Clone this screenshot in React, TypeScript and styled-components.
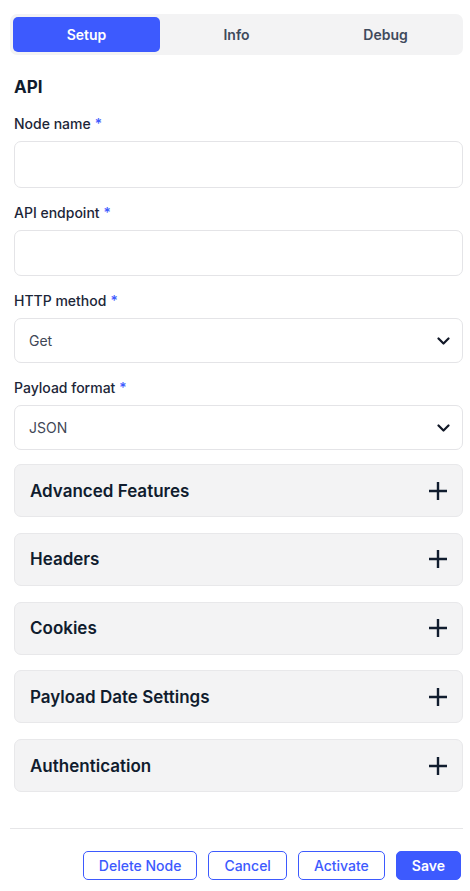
import React from 'react';
import styled, { createGlobalStyle } from 'styled-components';

const GlobalStyle = createGlobalStyle`
	body {
		margin: 0;
		background: #fff;
		font-family: Inter, 'Noto Sans', sans-serif;
		color: #0f1b2d;
	}
`;

const Page = styled.div`
	width: 453px;
	padding: 14px 0 0 10px;
	box-sizing: content-box;
`;

const Tabs = styled.div`
	display: grid;
	grid-template-columns: repeat(3, 1fr);
	padding: 3px;
	height: 41px;
	box-sizing: border-box;
	background: #f3f3f4;
	border-radius: 7px;
`;

const Tab = styled.button<{ active?: boolean }>`
	border: none;
	border-radius: 5px;
	margin-right: ${({ active }) => (active ? '2px' : '0')};
	font-family: inherit;
	font-size: 14px;
	font-weight: 600;
	background: ${({ active }) => (active ? '#3d5afe' : 'transparent')};
	color: ${({ active }) => (active ? '#fff' : '#3f4a5c')};
	cursor: pointer;
`;

const Form = styled.div`
	padding-left: 4px;
	display: flex;
	flex-direction: column;
`;

const Heading = styled.h2`
	margin: 20px 0 0;
	font-size: 17px;
	line-height: 24px;
	font-weight: 700;
	color: #101c2e;
`;

const Label = styled.label`
	display: block;
	margin-top: 15px;
	margin-bottom: 7px;
	font-size: 14px;
	line-height: 20px;
	font-weight: 500;
	color: #1c2638;
	span {
		color: #3d5afe;
		margin-left: 4px;
	}
`;

const Input = styled.input`
	height: 46.5px;
	border: 1px solid #e4e4e7;
	border-radius: 7px;
	box-sizing: border-box;
	padding: 0 14px;
	font-family: inherit;
	font-size: 14px;
	outline: none;
`;

const Select = styled.div`
	height: 45px;
	border: 1px solid #e4e4e7;
	border-radius: 7px;
	box-sizing: border-box;
	padding: 0 12px 0 14px;
	display: flex;
	align-items: center;
	justify-content: space-between;
	font-size: 14px;
	color: #3f4756;
`;

const Accordions = styled.div`
	margin-top: 14px;
	display: flex;
	flex-direction: column;
	gap: 15.75px;
`;

const Accordion = styled.div`
	height: 53px;
	box-sizing: border-box;
	background: #f3f3f4;
	border: 1px solid #e8e8ea;
	border-radius: 7px;
	padding: 0 15px 0 15px;
	display: flex;
	align-items: center;
	justify-content: space-between;
	font-size: 17px;
	font-weight: 600;
	color: #101c2e;
`;

const Divider = styled.hr`
	margin: 36px 0 0;
	border: none;
	border-top: 1px solid #e6e6e8;
`;

const Footer = styled.div`
	display: flex;
	justify-content: flex-end;
	gap: 11px;
	padding: 22px 2px 0 0;
`;

const Button = styled.button<{ primary?: boolean }>`
	height: 29px;
	padding: 0 15px;
	border-radius: 5px;
	border: 1px solid #3d5afe;
	background: ${({ primary }) => (primary ? '#3d5afe' : '#fff')};
	color: ${({ primary }) => (primary ? '#fff' : '#3d5afe')};
	font-family: inherit;
	font-size: 14px;
	font-weight: ${({ primary }) => (primary ? 600 : 500)};
	cursor: pointer;
`;

const Chevron = () => (
	<svg width='13' height='8' viewBox='0 0 13 8' fill='none' stroke='#111827' strokeWidth='2.2' strokeLinecap='round' strokeLinejoin='round'>
		<path d='M1.5 1.5l5 5 5-5' />
	</svg>
);

const Plus = () => (
	<svg width='18' height='18' viewBox='0 0 18 18' fill='none' stroke='#101c2e' strokeWidth='2.4'>
		<path d='M9 0v18M0 9h18' />
	</svg>
);

const sections = ['Advanced Features', 'Headers', 'Cookies', 'Payload Date Settings', 'Authentication'];

export default function App() {
	return (
		<Page>
			<GlobalStyle />
			<Tabs>
				<Tab active>Setup</Tab>
				<Tab>Info</Tab>
				<Tab>Debug</Tab>
			</Tabs>
			<Form>
				<Heading>API</Heading>
				<Label>
					Node name<span>*</span>
				</Label>
				<Input />
				<Label>
					API endpoint<span>*</span>
				</Label>
				<Input />
				<Label>
					HTTP method<span>*</span>
				</Label>
				<Select>
					Get
					<Chevron />
				</Select>
				<Label>
					Payload format<span>*</span>
				</Label>
				<Select>
					JSON
					<Chevron />
				</Select>
				<Accordions>
					{sections.map((s) => (
						<Accordion key={s}>
							{s}
							<Plus />
						</Accordion>
					))}
				</Accordions>
			</Form>
			<Divider />
			<Footer>
				<Button>Delete Node</Button>
				<Button>Cancel</Button>
				<Button>Activate</Button>
				<Button primary>Save</Button>
			</Footer>
		</Page>
	);
}
